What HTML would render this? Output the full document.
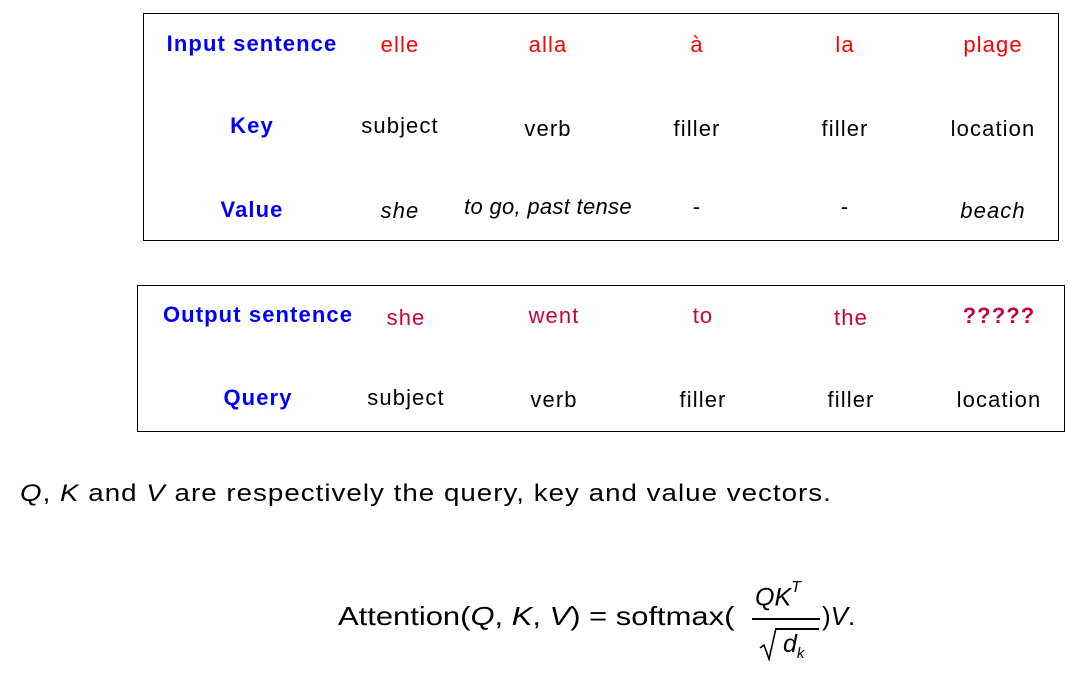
<!DOCTYPE html>
<html><head><meta charset="utf-8"><style>
body{margin:0;width:1082px;height:687px;background:#fff;font-family:"Liberation Sans",sans-serif;position:relative;overflow:hidden;color:#000}
.box{position:absolute;border:1px solid #000}
.t{position:absolute;transform:translate(-50%,-50%);white-space:nowrap;font-size:22px;letter-spacing:1.1px}
.b{color:#0000ff;font-weight:bold}
.r{color:#ff0000}
.c{color:#c8003f}
i{font-style:italic}
.s{position:absolute;font-size:24px;white-space:nowrap;transform-origin:0 0}
</style></head><body>
<div class="box" style="left:143px;top:13px;width:914px;height:226px"></div>
<div class="box" style="left:137px;top:285px;width:926px;height:145px"></div>

<div class="t b" style="left:252px;top:44px">Input sentence</div>
<div class="t r" style="left:400px;top:45px">elle</div>
<div class="t r" style="left:548px;top:45px">alla</div>
<div class="t r" style="left:697px;top:45px">à</div>
<div class="t r" style="left:845px;top:45px">la</div>
<div class="t r" style="left:993px;top:45px">plage</div>

<div class="t b" style="left:252px;top:126px">Key</div>
<div class="t" style="left:400px;top:126px">subject</div>
<div class="t" style="left:548px;top:129px">verb</div>
<div class="t" style="left:697px;top:129px">filler</div>
<div class="t" style="left:845px;top:129px">filler</div>
<div class="t" style="left:993px;top:129px">location</div>

<div class="t b" style="left:252px;top:210px">Value</div>
<div class="t" style="left:400px;top:211px"><i>she</i></div>
<div class="t" style="left:548px;top:207px;letter-spacing:0.3px"><i>to go, past tense</i></div>
<div class="t" style="left:697px;top:207px">-</div>
<div class="t" style="left:845px;top:207px">-</div>
<div class="t" style="left:993px;top:211px"><i>beach</i></div>

<div class="t b" style="left:258px;top:315px">Output sentence</div>
<div class="t c" style="left:406px;top:318px">she</div>
<div class="t c" style="left:554px;top:316px">went</div>
<div class="t c" style="left:703px;top:316px">to</div>
<div class="t c" style="left:851px;top:318px">the</div>
<div class="t c" style="left:999px;top:316px;font-weight:bold">?????</div>

<div class="t b" style="left:258px;top:398px">Query</div>
<div class="t" style="left:406px;top:398px">subject</div>
<div class="t" style="left:554px;top:400px">verb</div>
<div class="t" style="left:703px;top:400px">filler</div>
<div class="t" style="left:851px;top:400px">filler</div>
<div class="t" style="left:999px;top:400px">location</div>

<div class="s" style="left:20px;top:480px;letter-spacing:0.9px;transform:scaleX(1.153)"><i>Q</i>, <i>K</i> and <i>V</i> are respectively the query, key and value vectors.</div>

<div class="s" style="left:338px;top:601px;font-size:26px;transform:scaleX(1.19)">Attention(<i>Q</i>, <i>K</i>, <i>V</i>) = softmax(</div>
<div class="s" style="left:755px;top:583px;font-size:25px"><i>QK</i><sup style="font-size:16px;position:relative;top:-4px"><i>T</i></sup></div>
<div style="position:absolute;left:752px;top:618px;width:68px;height:2px;background:#000"></div>
<svg style="position:absolute;left:758px;top:626px" width="20" height="36"><path d="M2 22 L6 19 L11 33 L18 2" fill="none" stroke="#000" stroke-width="1.6"/></svg>
<div style="position:absolute;left:775px;top:628px;width:44px;height:1.5px;background:#000"></div>
<div class="s" style="left:783px;top:630px;font-size:25px"><i>d</i><sub style="font-size:15px"><i>k</i></sub></div>
<div class="s" style="left:822px;top:601px;font-size:26px">)<i>V</i>.</div>
</body></html>
